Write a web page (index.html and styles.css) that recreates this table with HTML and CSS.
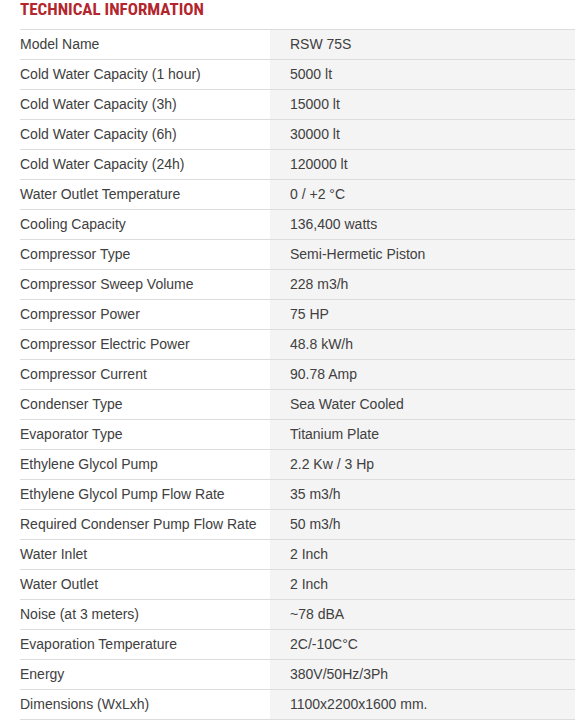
FILE: index.html
```html
<!DOCTYPE html>
<html>
<head>
<meta charset="utf-8">
<link rel="stylesheet" href="styles.css">
</head>
<body>
<div class="wrap">
  <h2 class="title">TECHNICAL INFORMATION</h2>
  <table class="spec">
    <tbody>
      <tr><td>Model Name</td><td>RSW 75S</td></tr>
      <tr><td>Cold Water Capacity (1 hour)</td><td>5000 lt</td></tr>
      <tr><td>Cold Water Capacity (3h)</td><td>15000 lt</td></tr>
      <tr><td>Cold Water Capacity (6h)</td><td>30000 lt</td></tr>
      <tr><td>Cold Water Capacity (24h)</td><td>120000 lt</td></tr>
      <tr><td>Water Outlet Temperature</td><td>0 / +2 °C</td></tr>
      <tr><td>Cooling Capacity</td><td>136,400 watts</td></tr>
      <tr><td>Compressor Type</td><td>Semi-Hermetic Piston</td></tr>
      <tr><td>Compressor Sweep Volume</td><td>228 m3/h</td></tr>
      <tr><td>Compressor Power</td><td>75 HP</td></tr>
      <tr><td>Compressor Electric Power</td><td>48.8 kW/h</td></tr>
      <tr><td>Compressor Current</td><td>90.78 Amp</td></tr>
      <tr><td>Condenser Type</td><td>Sea Water Cooled</td></tr>
      <tr><td>Evaporator Type</td><td>Titanium Plate</td></tr>
      <tr><td>Ethylene Glycol Pump</td><td>2.2 Kw / 3 Hp</td></tr>
      <tr><td>Ethylene Glycol Pump Flow Rate</td><td>35 m3/h</td></tr>
      <tr><td>Required Condenser Pump Flow Rate</td><td>50 m3/h</td></tr>
      <tr><td>Water Inlet</td><td>2 Inch</td></tr>
      <tr><td>Water Outlet</td><td>2 Inch</td></tr>
      <tr><td>Noise (at 3 meters)</td><td>~78 dBA</td></tr>
      <tr><td>Evaporation Temperature</td><td>2C/-10C°C</td></tr>
      <tr><td>Energy</td><td>380V/50Hz/3Ph</td></tr>
      <tr><td>Dimensions (WxLxh)</td><td>1100x2200x1600 mm.</td></tr>
    </tbody>
  </table>
</div>
</body>
</html>
```

FILE: styles.css
```css
html, body {
  margin: 0;
  padding: 0;
  background: #ffffff;
}
.wrap {
  padding: 0 10px 0 20px;
}
.title {
  margin: 0;
  height: 29px;
  font-family: "Liberation Sans Narrow", "Roboto Condensed", Roboto, sans-serif;
  font-weight: bold;
  font-size: 17px;
  line-height: 19px;
  color: #b3262d;
  letter-spacing: 0;
}
.spec {
  width: 555px;
  border-collapse: collapse;
  font-family: "Liberation Sans", Arial, sans-serif;
  font-size: 14px;
  color: #404040;
}
.spec td {
  height: 28px;
  padding: 0 0 1px 0;
  border-top: 1px solid #dcdcdc;
  border-bottom: 1px solid #dcdcdc;
  vertical-align: middle;
}
.spec td:first-child {
  width: 250px;
}
.spec td:last-child {
  background: #f4f4f4;
  padding-left: 20px;
}
```
